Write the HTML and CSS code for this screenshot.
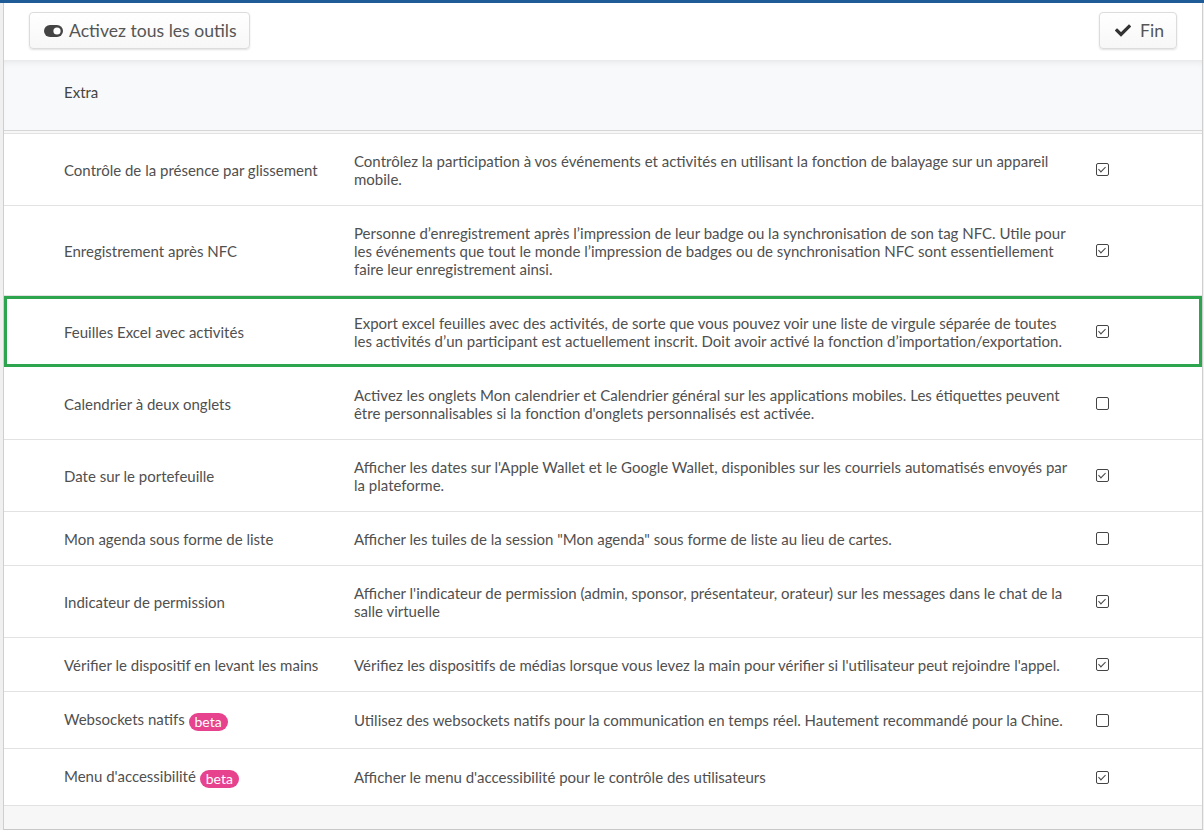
FILE: index.html
```html
<!DOCTYPE html>
<html lang="fr">
<head>
<meta charset="utf-8">
<title>Outils</title>
<link rel="stylesheet" href="styles.css">
</head>
<body>
<div class="topline"></div>
<div class="page">
  <div class="toolbar">
    <button class="btn">
      <svg class="ico-toggle" width="19" height="12" viewBox="0 0 19 12"><rect x="0" y="0" width="19" height="12" rx="6" fill="#444"/><circle cx="13" cy="6" r="3.6" fill="#fff"/></svg>
      <span>Activez tous les outils</span>
    </button>
    <button class="btn btn-fin">
      <svg class="ico-check" width="16" height="13" viewBox="0 0 16 13"><polyline points="2,6.5 6,10.5 14,2.5" fill="none" stroke="#333" stroke-width="3.2" stroke-linecap="square"/></svg>
      <span>Fin</span>
    </button>
  </div>
  <div class="section-head">Extra</div>
  <div class="list">
    <div class="row">
      <div class="name">Contrôle de la présence par glissement</div>
      <div class="desc">Contrôlez la participation à vos événements et activités en utilisant la fonction de balayage sur un appareil mobile.</div>
      <div class="check"><span class="cb on"></span></div>
    </div>
    <div class="row">
      <div class="name">Enregistrement après NFC</div>
      <div class="desc">Personne d’enregistrement après l’impression de leur badge ou la synchronisation de son tag NFC. Utile pour les événements que tout le monde l’impression de badges ou de synchronisation NFC sont essentiellement faire leur enregistrement ainsi.</div>
      <div class="check"><span class="cb on"></span></div>
    </div>
    <div class="row highlight">
      <div class="name">Feuilles Excel avec activités</div>
      <div class="desc">Export excel feuilles avec des activités, de sorte que vous pouvez voir une liste de virgule séparée de toutes les activités d’un participant est actuellement inscrit. Doit avoir activé la fonction d’importation/exportation.</div>
      <div class="check"><span class="cb on"></span></div>
    </div>
    <div class="row">
      <div class="name">Calendrier à deux onglets</div>
      <div class="desc">Activez les onglets Mon calendrier et Calendrier général sur les applications mobiles. Les étiquettes peuvent être personnalisables si la fonction d'onglets personnalisés est activée.</div>
      <div class="check"><span class="cb"></span></div>
    </div>
    <div class="row">
      <div class="name">Date sur le portefeuille</div>
      <div class="desc">Afficher les dates sur l'Apple Wallet et le Google Wallet, disponibles sur les courriels automatisés envoyés par la plateforme.</div>
      <div class="check"><span class="cb on"></span></div>
    </div>
    <div class="row">
      <div class="name">Mon agenda sous forme de liste</div>
      <div class="desc">Afficher les tuiles de la session "Mon agenda" sous forme de liste au lieu de cartes.</div>
      <div class="check"><span class="cb"></span></div>
    </div>
    <div class="row">
      <div class="name">Indicateur de permission</div>
      <div class="desc">Afficher l'indicateur de permission (admin, sponsor, présentateur, orateur) sur les messages dans le chat de la salle virtuelle</div>
      <div class="check"><span class="cb on"></span></div>
    </div>
    <div class="row">
      <div class="name">Vérifier le dispositif en levant les mains</div>
      <div class="desc">Vérifiez les dispositifs de médias lorsque vous levez la main pour vérifier si l'utilisateur peut rejoindre l'appel.</div>
      <div class="check"><span class="cb on"></span></div>
    </div>
    <div class="row">
      <div class="name">Websockets natifs <span class="badge">beta</span></div>
      <div class="desc">Utilisez des websockets natifs pour la communication en temps réel. Hautement recommandé pour la Chine.</div>
      <div class="check"><span class="cb"></span></div>
    </div>
    <div class="row">
      <div class="name">Menu d'accessibilité <span class="badge">beta</span></div>
      <div class="desc">Afficher le menu d'accessibilité pour le contrôle des utilisateurs</div>
      <div class="check"><span class="cb on"></span></div>
    </div>
  </div>
</div>
</body>
</html>
```

FILE: styles.css
```css
* { box-sizing: border-box; }
html, body { margin: 0; padding: 0; }
body {
  background: #f0f0f0;
  font-family: Lato, "Open Sans", Arial, sans-serif;
  color: #505050;
  height: 830px;
  overflow: hidden;
}
.topline {
  height: 3px;
  background: #1f5b96;
}
.page {
  margin: 0 1px 0 3px;
  height: 827px;
  background: #f7f7f7;
  border-left: 1px solid #cfcfcf;
  border-right: 1px solid #cfcfcf;
  border-bottom: 1px solid #c8c8c8;
}
.toolbar {
  height: 57px;
  background: #fff;
  display: flex;
  justify-content: space-between;
  align-items: flex-start;
  padding: 9px 25px 0 25px;
}
.btn {
  display: flex;
  align-items: center;
  height: 37px;
  padding: 0 12px 0 14px;
  border: 1px solid #dcdcdc;
  border-radius: 4px;
  background: linear-gradient(#ffffff, #f7f7f7);
  box-shadow: 0 1px 2px rgba(0,0,0,0.12);
  font-family: Lato, "Open Sans", Arial, sans-serif;
  font-size: 17.6px;
  color: #555;
  gap: 6px;
}
.btn-fin { padding-left: 15px; padding-right: 12px; gap: 9px; }
.section-head {
  height: 71px;
  background: #f8f9fb;
  box-shadow: inset 0 6px 8px -6px rgba(0,0,0,0.12);
  border-bottom: 1px solid #d6d6d6;
  padding: 23px 0 0 60px;
  font-size: 15px;
  line-height: 18px;
  color: #444;
}
.list {
  margin-top: 2px;
  border-top: 1px solid #e2e2e2;
  background: #fff;
}
.row {
  display: grid;
  grid-template-columns: 350px 1fr 130px;
  align-items: center;
  padding: 17.5px 0;
  border-bottom: 1px solid #e2e2e2;
  font-size: 15px;
  line-height: 18px;
}
.row.highlight {
  box-shadow: inset 0 0 0 3px #2da44e;
  border-bottom-color: transparent;
}
.name {
  padding-left: 60px;
  color: #505050;
}
.desc {
  color: #505050;
  padding-right: 2px;
}
.check {
  padding-left: 24px;
  display: flex;
  align-items: center;
}
.cb {
  display: inline-block;
  width: 13px;
  height: 13px;
  border: 1px solid #444;
  border-radius: 2px;
  background: #fff;
  position: relative;
}
.cb.on::after {
  content: "";
  position: absolute;
  left: 3px;
  top: 1px;
  width: 3px;
  height: 6px;
  border-right: 1.6px solid #444;
  border-bottom: 1.6px solid #444;
  transform: rotate(45deg);
}
.badge {
  display: inline-block;
  height: 18px;
  line-height: 18px;
  padding: 0 6px;
  border-radius: 9px;
  background: #e6428e;
  color: #fff;
  font-size: 14px;
  vertical-align: -2px;
}
```
